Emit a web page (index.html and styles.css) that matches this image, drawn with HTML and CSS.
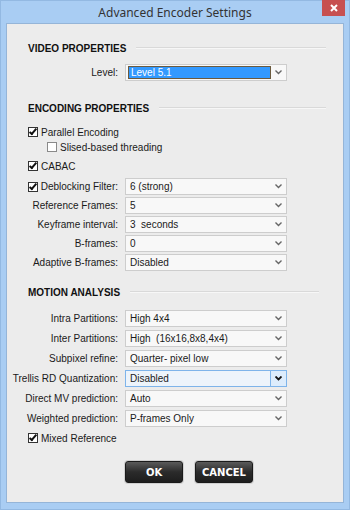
FILE: index.html
```html
<!DOCTYPE html>
<html lang="en">
<head>
  <meta charset="UTF-8">
  <title>Advanced Encoder Settings</title>
  <link rel="stylesheet" href="styles.css">
</head>
<body>

<div class="window">
  <div class="titlebar">
    <span class="title">Advanced Encoder Settings</span>
    <div class="close">
      <svg width="8" height="8" viewBox="0 0 8 8"><path d="M1 1L7 7M7 1L1 7" stroke="#fff" stroke-width="2"/></svg>
    </div>
  </div>

  <div class="panel">
    <div class="section-head"><span>VIDEO PROPERTIES</span><div class="rule"></div></div>
    <div class="row level-row">
      <div class="label">Level:</div>
      <div class="select level"><div class="value"><span class="hl">Level 5.1</span></div><div class="arrow"><svg width="7" height="5" viewBox="0 0 7 5"><path d="M0.5 0.5L3.5 3.5L6.5 0.5" fill="none" stroke="currentColor" stroke-width="1.4"/></svg></div></div>
    </div>

    <div class="section-head enc-head"><span>ENCODING PROPERTIES</span><div class="rule"></div></div>
    <div class="check-row parallel"><span class="box checked"></span>Parallel Encoding</div>
    <div class="check-row sub"><span class="box"></span>Slised-based threading</div>
    <div class="check-row cabac"><span class="box checked"></span>CABAC</div>
    <div class="fields enc-fields">
      <div class="row">
        <div class="label"><span class="box checked"></span>Deblocking Filter:</div>
        <div class="select"><div class="value">6 (strong)</div><div class="arrow"><svg width="7" height="5" viewBox="0 0 7 5"><path d="M0.5 0.5L3.5 3.5L6.5 0.5" fill="none" stroke="currentColor" stroke-width="1.4"/></svg></div></div>
      </div>
      <div class="row">
        <div class="label">Reference Frames:</div>
        <div class="select"><div class="value">5</div><div class="arrow"><svg width="7" height="5" viewBox="0 0 7 5"><path d="M0.5 0.5L3.5 3.5L6.5 0.5" fill="none" stroke="currentColor" stroke-width="1.4"/></svg></div></div>
      </div>
      <div class="row">
        <div class="label">Keyframe interval:</div>
        <div class="select"><div class="value">3&nbsp; seconds</div><div class="arrow"><svg width="7" height="5" viewBox="0 0 7 5"><path d="M0.5 0.5L3.5 3.5L6.5 0.5" fill="none" stroke="currentColor" stroke-width="1.4"/></svg></div></div>
      </div>
      <div class="row">
        <div class="label">B-frames:</div>
        <div class="select"><div class="value">0</div><div class="arrow"><svg width="7" height="5" viewBox="0 0 7 5"><path d="M0.5 0.5L3.5 3.5L6.5 0.5" fill="none" stroke="currentColor" stroke-width="1.4"/></svg></div></div>
      </div>
      <div class="row">
        <div class="label">Adaptive B-frames:</div>
        <div class="select"><div class="value">Disabled</div><div class="arrow"><svg width="7" height="5" viewBox="0 0 7 5"><path d="M0.5 0.5L3.5 3.5L6.5 0.5" fill="none" stroke="currentColor" stroke-width="1.4"/></svg></div></div>
      </div>
    </div>

    <div class="section-head motion-head"><span>MOTION ANALYSIS</span><div class="rule"></div></div>
    <div class="fields motion-fields">
      <div class="row">
        <div class="label">Intra Partitions:</div>
        <div class="select"><div class="value">High 4x4</div><div class="arrow"><svg width="7" height="5" viewBox="0 0 7 5"><path d="M0.5 0.5L3.5 3.5L6.5 0.5" fill="none" stroke="currentColor" stroke-width="1.4"/></svg></div></div>
      </div>
      <div class="row">
        <div class="label">Inter Partitions:</div>
        <div class="select"><div class="value">High&nbsp; (16x16,8x8,4x4)</div><div class="arrow"><svg width="7" height="5" viewBox="0 0 7 5"><path d="M0.5 0.5L3.5 3.5L6.5 0.5" fill="none" stroke="currentColor" stroke-width="1.4"/></svg></div></div>
      </div>
      <div class="row">
        <div class="label">Subpixel refine:</div>
        <div class="select"><div class="value">Quarter- pixel low</div><div class="arrow"><svg width="7" height="5" viewBox="0 0 7 5"><path d="M0.5 0.5L3.5 3.5L6.5 0.5" fill="none" stroke="currentColor" stroke-width="1.4"/></svg></div></div>
      </div>
      <div class="row">
        <div class="label">Trellis RD Quantization:</div>
        <div class="select hover"><div class="value">Disabled</div><div class="arrow"><svg width="7" height="5" viewBox="0 0 7 5"><path d="M0.5 0.5L3.5 3.5L6.5 0.5" fill="none" stroke="currentColor" stroke-width="1.8"/></svg></div></div>
      </div>
      <div class="row">
        <div class="label">Direct MV prediction:</div>
        <div class="select"><div class="value">Auto</div><div class="arrow"><svg width="7" height="5" viewBox="0 0 7 5"><path d="M0.5 0.5L3.5 3.5L6.5 0.5" fill="none" stroke="currentColor" stroke-width="1.4"/></svg></div></div>
      </div>
      <div class="row">
        <div class="label">Weighted prediction:</div>
        <div class="select"><div class="value">P-frames Only</div><div class="arrow"><svg width="7" height="5" viewBox="0 0 7 5"><path d="M0.5 0.5L3.5 3.5L6.5 0.5" fill="none" stroke="currentColor" stroke-width="1.4"/></svg></div></div>
      </div>
    </div>
    <div class="check-row mixed"><span class="box checked"></span>Mixed Reference</div>

    <div class="buttons">
      <button class="btn">OK</button>
      <button class="btn">CANCEL</button>
    </div>
  </div>
</div>

</body>
</html>
```

FILE: styles.css
```css
body {
  margin: 0;
  font-family: "Liberation Sans", Arial, sans-serif;
  font-size: 10px;
  color: #1a1a1a;
}
.window {
  width: 350px;
  height: 510px;
  background: #a9cdf3;
  box-sizing: border-box;
  border: 1px solid #93b9e2;
  display: flex;
  flex-direction: column;
}
.titlebar {
  height: 22px;
  display: flex;
  justify-content: center;
  align-items: center;
  position: relative;
}
.title {
  font-family: "Noto Sans", sans-serif;
  font-size: 12px;
  color: #333;
  margin-top: 1px;
}
.close {
  position: absolute;
  top: -1px;
  right: 4px;
  width: 23px;
  height: 16px;
  background: #c75050;
  display: flex;
  justify-content: center;
  align-items: center;
}
.panel {
  margin: 0 5px;
  height: 480px;
  background: #ececec;
  border: 1px solid #95b5d8;
  box-sizing: border-box;
  padding: 17px 17px 0 21px;
}
.section-head {
  height: 14px;
  display: flex;
  align-items: center;
  font-weight: bold;
  font-size: 10px;
  color: #111;
}
.rule {
  flex: 1;
  height: 1px;
  background: #d9d9d9;
  border-bottom: 1px solid #f7f7f7;
  margin-left: 10px;
}
.enc-head { margin-top: 20px; }
.motion-head { margin-top: 14px; margin-right: 7px; }
.row {
  height: 17px;
  display: flex;
  align-items: center;
  gap: 7px;
}
.level-row { margin-top: 9px; }
.fields {
  display: flex;
  flex-direction: column;
  gap: 2px;
}
.enc-fields { margin-top: 5px; }
.motion-fields { margin-top: 11px; gap: 3px; }
.label {
  width: 90px;
  flex: none;
  display: flex;
  justify-content: flex-end;
  align-items: center;
  white-space: nowrap;
}
.label .box { margin-right: auto; }
.select {
  width: 162px;
  height: 17px;
  box-sizing: border-box;
  border: 1px solid #cdcdcd;
  background: #f8f8f8;
  display: flex;
  align-items: stretch;
}
.value {
  flex: 1;
  display: flex;
  align-items: center;
  padding-left: 4px;
  white-space: nowrap;
}
.arrow {
  width: 15px;
  display: flex;
  justify-content: center;
  align-items: center;
  color: #666;
}
.level .value {
  padding: 1px 0 1px 2px;
}
.hl {
  flex: 1;
  height: 100%;
  box-sizing: border-box;
  background: #3399ff;
  color: #fff;
  border: 1px solid #6b5a3e;
  padding-left: 2px;
  display: flex;
  align-items: center;
}
.select.hover {
  border-color: #7eb4ea;
  background: #edf4fb;
}
.select.hover .arrow {
  border-left: 1px solid #7eb4ea;
  background: #dcecfc;
  color: #111;
}
.check-row {
  height: 14px;
  display: flex;
  align-items: center;
  gap: 3px;
}
.parallel { margin-top: 10px; }
.sub { margin-top: 1px; padding-left: 19px; }
.cabac { margin-top: 5px; }
.mixed { margin-top: 4px; }
.box {
  width: 8px;
  height: 8px;
  border: 1px solid #8a8a8a;
  background: #fff;
  flex: none;
  position: relative;
}
.box.checked { border-color: #333; }
.box.checked::after {
  content: '';
  position: absolute;
  left: 2px;
  top: -1px;
  width: 2px;
  height: 6px;
  border: solid #111;
  border-width: 0 2px 2px 0;
  transform: rotate(40deg);
}
.buttons {
  margin-top: 16px;
  display: flex;
  gap: 12px;
  padding-left: 97px;
}
.btn {
  width: 58px;
  height: 22px;
  border: 1px solid #1a1a1a;
  border-radius: 3px;
  background: linear-gradient(#5a5a5a, #2b2b2b 50%, #1e1e1e);
  color: #fff;
  font-family: "DejaVu Sans", sans-serif;
  font-weight: bold;
  font-size: 10px;
  box-shadow: 0 0 0 1px #d0d0d0;
  padding: 0;
}
```
